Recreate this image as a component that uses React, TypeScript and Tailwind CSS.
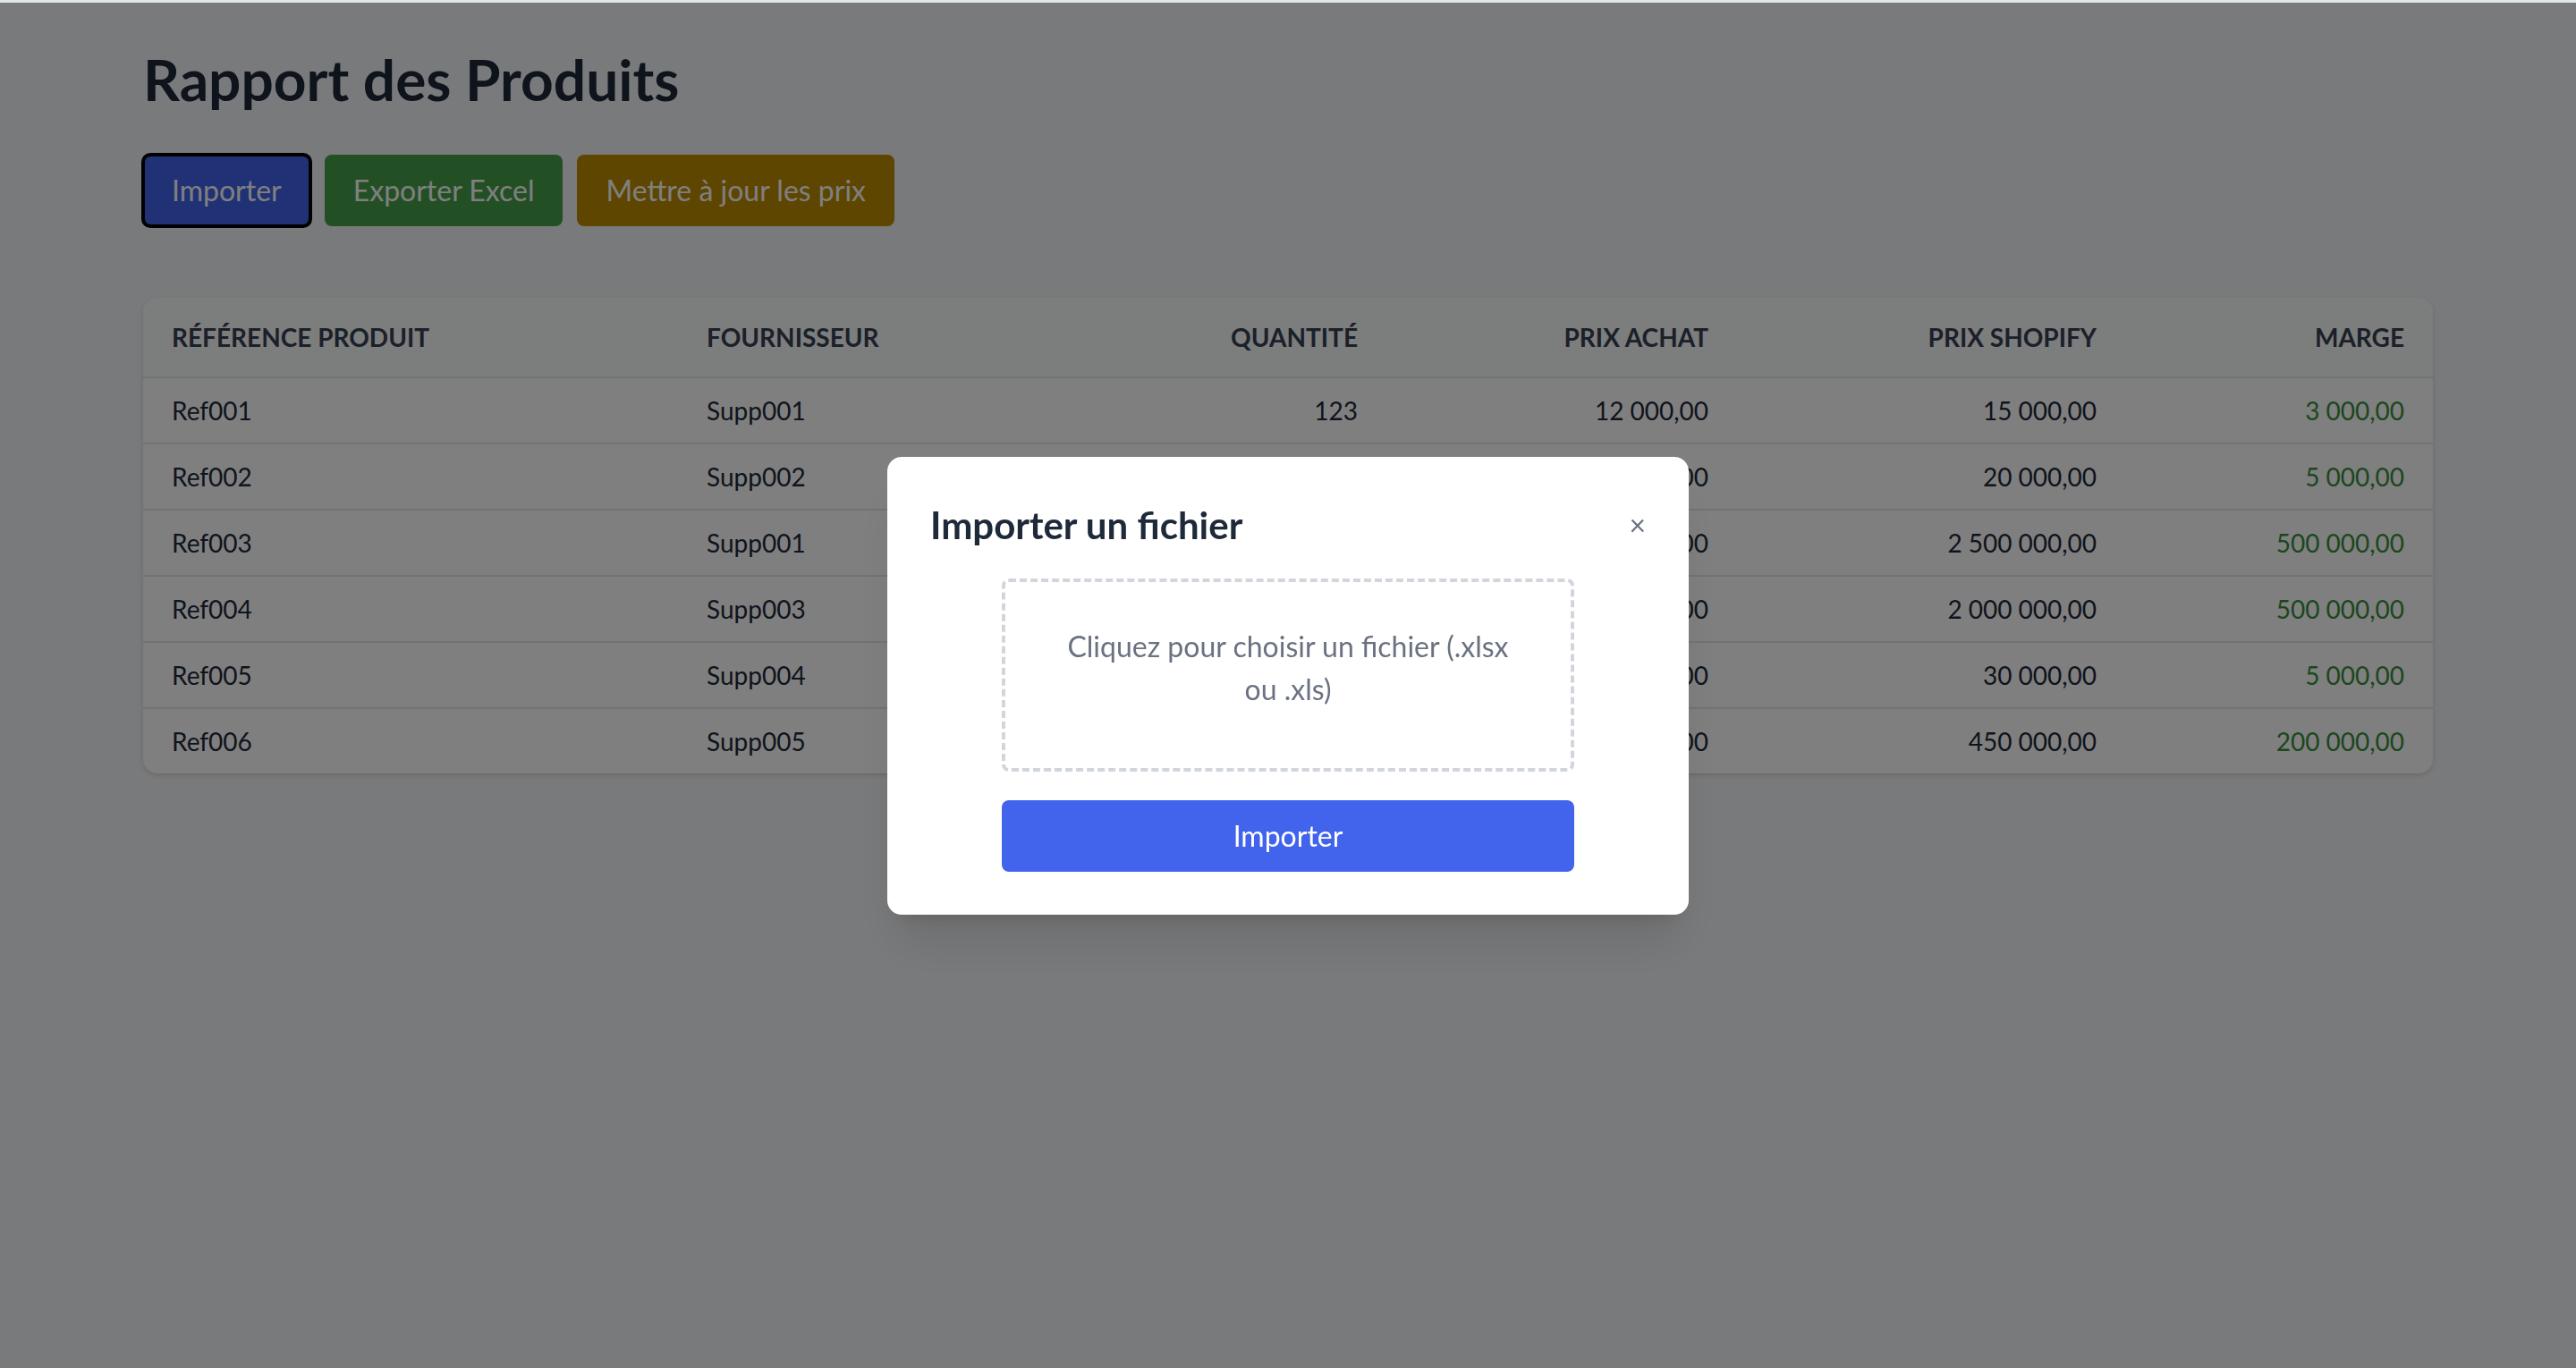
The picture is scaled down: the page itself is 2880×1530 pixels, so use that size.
import React from 'react';

type Product = {
  ref: string;
  supplier: string;
  qty: number;
  buy: number;
  shopify: number;
};

const products: Product[] = [
  { ref: 'Ref001', supplier: 'Supp001', qty: 123, buy: 12000, shopify: 15000 },
  { ref: 'Ref002', supplier: 'Supp002', qty: 45, buy: 15000, shopify: 20000 },
  { ref: 'Ref003', supplier: 'Supp001', qty: 10, buy: 2000000, shopify: 2500000 },
  { ref: 'Ref004', supplier: 'Supp003', qty: 8, buy: 1500000, shopify: 2000000 },
  { ref: 'Ref005', supplier: 'Supp004', qty: 60, buy: 25000, shopify: 30000 },
  { ref: 'Ref006', supplier: 'Supp005', qty: 25, buy: 250000, shopify: 450000 },
];

const money = (n: number) =>
  new Intl.NumberFormat('fr-FR', { minimumFractionDigits: 2, maximumFractionDigits: 2 }).format(n);

function ProductTable() {
  return (
    <div className="bg-white rounded-lg shadow overflow-hidden">
      <table className="w-full table-fixed">
        <thead className="bg-gray-50 border-b border-gray-200">
          <tr className="text-sm font-bold uppercase text-gray-700">
            <th className="w-[299px] px-4 py-3 text-left">Référence produit</th>
            <th className="w-[230px] px-4 py-3 text-left">Fournisseur</th>
            <th className="w-[166px] px-4 py-3 text-right">Quantité</th>
            <th className="w-[196px] px-4 py-3 text-right">Prix achat</th>
            <th className="w-[217px] px-4 py-3 text-right">Prix Shopify</th>
            <th className="px-4 py-3 text-right">Marge</th>
          </tr>
        </thead>
        <tbody className="text-sm text-gray-800">
          {products.map((p, i) => (
            <tr key={p.ref} className={i < products.length - 1 ? 'border-b border-gray-200' : ''}>
              <td className="px-4 py-2">{p.ref}</td>
              <td className="px-4 py-2">{p.supplier}</td>
              <td className="px-4 py-2 text-right">{p.qty}</td>
              <td className="px-4 py-2 text-right">{money(p.buy)}</td>
              <td className="px-4 py-2 text-right">{money(p.shopify)}</td>
              <td className="px-4 py-2 text-right text-[#388e3c]">{money(p.shopify - p.buy)}</td>
            </tr>
          ))}
        </tbody>
      </table>
    </div>
  );
}

function ImportModal() {
  return (
    <div className="fixed inset-x-0 bottom-0 top-[3px] bg-black/50 flex items-center justify-center">
      <div className="[zoom:2] w-full max-w-md bg-white rounded-lg shadow-xl p-6">
        <div className="flex items-center justify-between mb-4">
          <h2 className="text-[21px] leading-7 font-bold text-gray-800">Importer un fichier</h2>
          <button className="text-gray-500 text-base leading-none">×</button>
        </div>
        <div className="px-10">
          <label className="block border-2 border-dashed border-gray-300 rounded px-6 pt-6 pb-8 text-center text-gray-500 cursor-pointer">
            Cliquez pour choisir un fichier (.xlsx ou .xls)
          </label>
          <button className="mt-4 w-full bg-[#4263eb] text-white py-2 rounded">Importer</button>
        </div>
      </div>
    </div>
  );
}

export default function App() {
  return (
    <div className="min-h-screen bg-gray-100 border-t-[3px] border-[#dfe7e4] font-['Lato',sans-serif]">
      <div className="[zoom:2] p-6 pt-[25px]">
        <div className="max-w-7xl mx-auto">
          <h1 className="text-[32px] leading-9 font-bold text-gray-800 mb-6">Rapport des Produits</h1>
          <div className="flex gap-2 mb-10">
            <button className="bg-[#4263eb] text-white px-4 py-2 rounded outline-2 -outline-offset-1 outline-black">
              Importer
            </button>
            <button className="bg-[#45a049] text-white px-4 py-2 rounded">Exporter Excel</button>
            <button className="bg-[#bd8a00] text-white px-4 py-2 rounded">Mettre à jour les prix</button>
          </div>
          <ProductTable />
        </div>
      </div>
      <ImportModal />
    </div>
  );
}
